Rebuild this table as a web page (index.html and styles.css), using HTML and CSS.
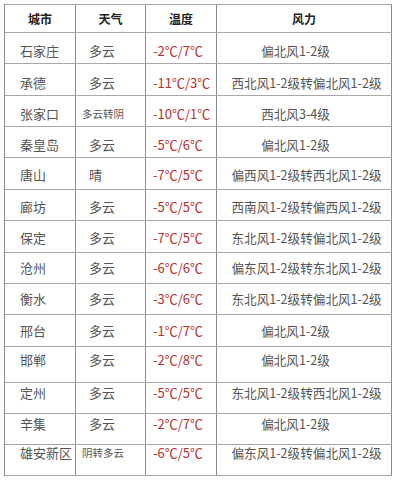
FILE: index.html
```html
<!DOCTYPE html>
<html lang="zh-CN">
<head>
<meta charset="utf-8">
<title>河北天气</title>
<link rel="stylesheet" href="styles.css">
</head>
<body>
<div class="table">
  <div class="row head">
    <div class="cell c1">城市</div>
    <div class="cell c2">天气</div>
    <div class="cell c3">温度</div>
    <div class="cell c4">风力</div>
  </div>
  <div class="row r1">
    <div class="cell c1">石家庄</div><div class="cell c2">多云</div><div class="cell c3">-2℃/7℃</div><div class="cell c4 short">偏北风1-2级</div>
  </div>
  <div class="row r2">
    <div class="cell c1">承德</div><div class="cell c2">多云</div><div class="cell c3">-11℃/3℃</div><div class="cell c4">西北风1-2级转偏北风1-2级</div>
  </div>
  <div class="row r3">
    <div class="cell c1">张家口</div><div class="cell c2 small">多云转阴</div><div class="cell c3">-10℃/1℃</div><div class="cell c4 short">西北风3-4级</div>
  </div>
  <div class="row r4">
    <div class="cell c1">秦皇岛</div><div class="cell c2">多云</div><div class="cell c3">-5℃/6℃</div><div class="cell c4 short">偏北风1-2级</div>
  </div>
  <div class="row r5">
    <div class="cell c1">唐山</div><div class="cell c2">晴</div><div class="cell c3">-7℃/5℃</div><div class="cell c4">偏西风1-2级转西北风1-2级</div>
  </div>
  <div class="row r6">
    <div class="cell c1">廊坊</div><div class="cell c2">多云</div><div class="cell c3">-5℃/5℃</div><div class="cell c4">西南风1-2级转偏西风1-2级</div>
  </div>
  <div class="row r7">
    <div class="cell c1">保定</div><div class="cell c2">多云</div><div class="cell c3">-7℃/5℃</div><div class="cell c4">东北风1-2级转偏北风1-2级</div>
  </div>
  <div class="row r8">
    <div class="cell c1">沧州</div><div class="cell c2">多云</div><div class="cell c3">-6℃/6℃</div><div class="cell c4">偏东风1-2级转东北风1-2级</div>
  </div>
  <div class="row r9">
    <div class="cell c1">衡水</div><div class="cell c2">多云</div><div class="cell c3">-3℃/6℃</div><div class="cell c4">东北风1-2级转偏北风1-2级</div>
  </div>
  <div class="row r10">
    <div class="cell c1">邢台</div><div class="cell c2">多云</div><div class="cell c3">-1℃/7℃</div><div class="cell c4 short">偏北风1-2级</div>
  </div>
  <div class="row r11">
    <div class="cell c1">邯郸</div><div class="cell c2">多云</div><div class="cell c3">-2℃/8℃</div><div class="cell c4 short">偏北风1-2级</div>
  </div>
  <div class="row r12">
    <div class="cell c1">定州</div><div class="cell c2">多云</div><div class="cell c3">-5℃/5℃</div><div class="cell c4">东北风1-2级转西北风1-2级</div>
  </div>
  <div class="row r13">
    <div class="cell c1">辛集</div><div class="cell c2">多云</div><div class="cell c3">-2℃/7℃</div><div class="cell c4 short">偏北风1-2级</div>
  </div>
  <div class="row r14">
    <div class="cell c1">雄安新区</div><div class="cell c2 small">阴转多云</div><div class="cell c3">-6℃/5℃</div><div class="cell c4">偏东风1-2级转偏北风1-2级</div>
  </div>
</div>
</body>
</html>
```
FILE: styles.css
```css
html, body {
  margin: 0;
  padding: 0;
  background: #ffffff;
}

body {
  font-family: "Noto Sans CJK SC", "Noto Sans", sans-serif;
  color: #555555;
  font-size: 13px;
}

.table {
  margin: 4px 0 0 4px;
  width: 387px;
  border-top: 1px solid #a8a8a8;
  border-left: 1px solid #8a8a8a;
  display: flex;
  flex-direction: column;
}

.row {
  display: grid;
  grid-template-columns: 71px 70px 71px 175px;
  border-bottom: 1px solid #a8a8a8;
  box-sizing: border-box;
  height: 31px;
}

.cell {
  border-right: 1px solid #8a8a8a;
  display: flex;
  align-items: center;
  line-height: 16px;
  white-space: nowrap;
  box-sizing: border-box;
}

.head {
  height: 28px;
}

.head .cell {
  justify-content: center;
  font-weight: 700;
  font-size: 12px;
  color: #222222;
}

.c1 { padding-left: 15px; }
.c2 { padding-left: 13px; }
.c2.small { padding-left: 6px; font-size: 10.5px; }
.c3 { padding-left: 7px; color: #b8312f; }
.c4 { justify-content: center; padding-left: 5px; font-size: 12.6px; }
.c4.short { padding-left: 0; padding-right: 17px; }

.head .cell { padding: 0; font-size: 12px; }

.r2, .r5, .r7, .r10 { height: 32px; }
.r11 { height: 36px; }

.r1 .cell, .r2 .cell, .r3 .cell { padding-top: 6px; }
.r4 .cell { padding-top: 5px; }
.r5 .cell, .r6 .cell { padding-top: 3px; }
.r7 .cell { padding-top: 2px; }
.r11 .cell { padding-bottom: 9px; }
.r12 .cell, .r13 .cell { padding-bottom: 11px; }
.r14 .cell { padding-bottom: 14px; }
```
